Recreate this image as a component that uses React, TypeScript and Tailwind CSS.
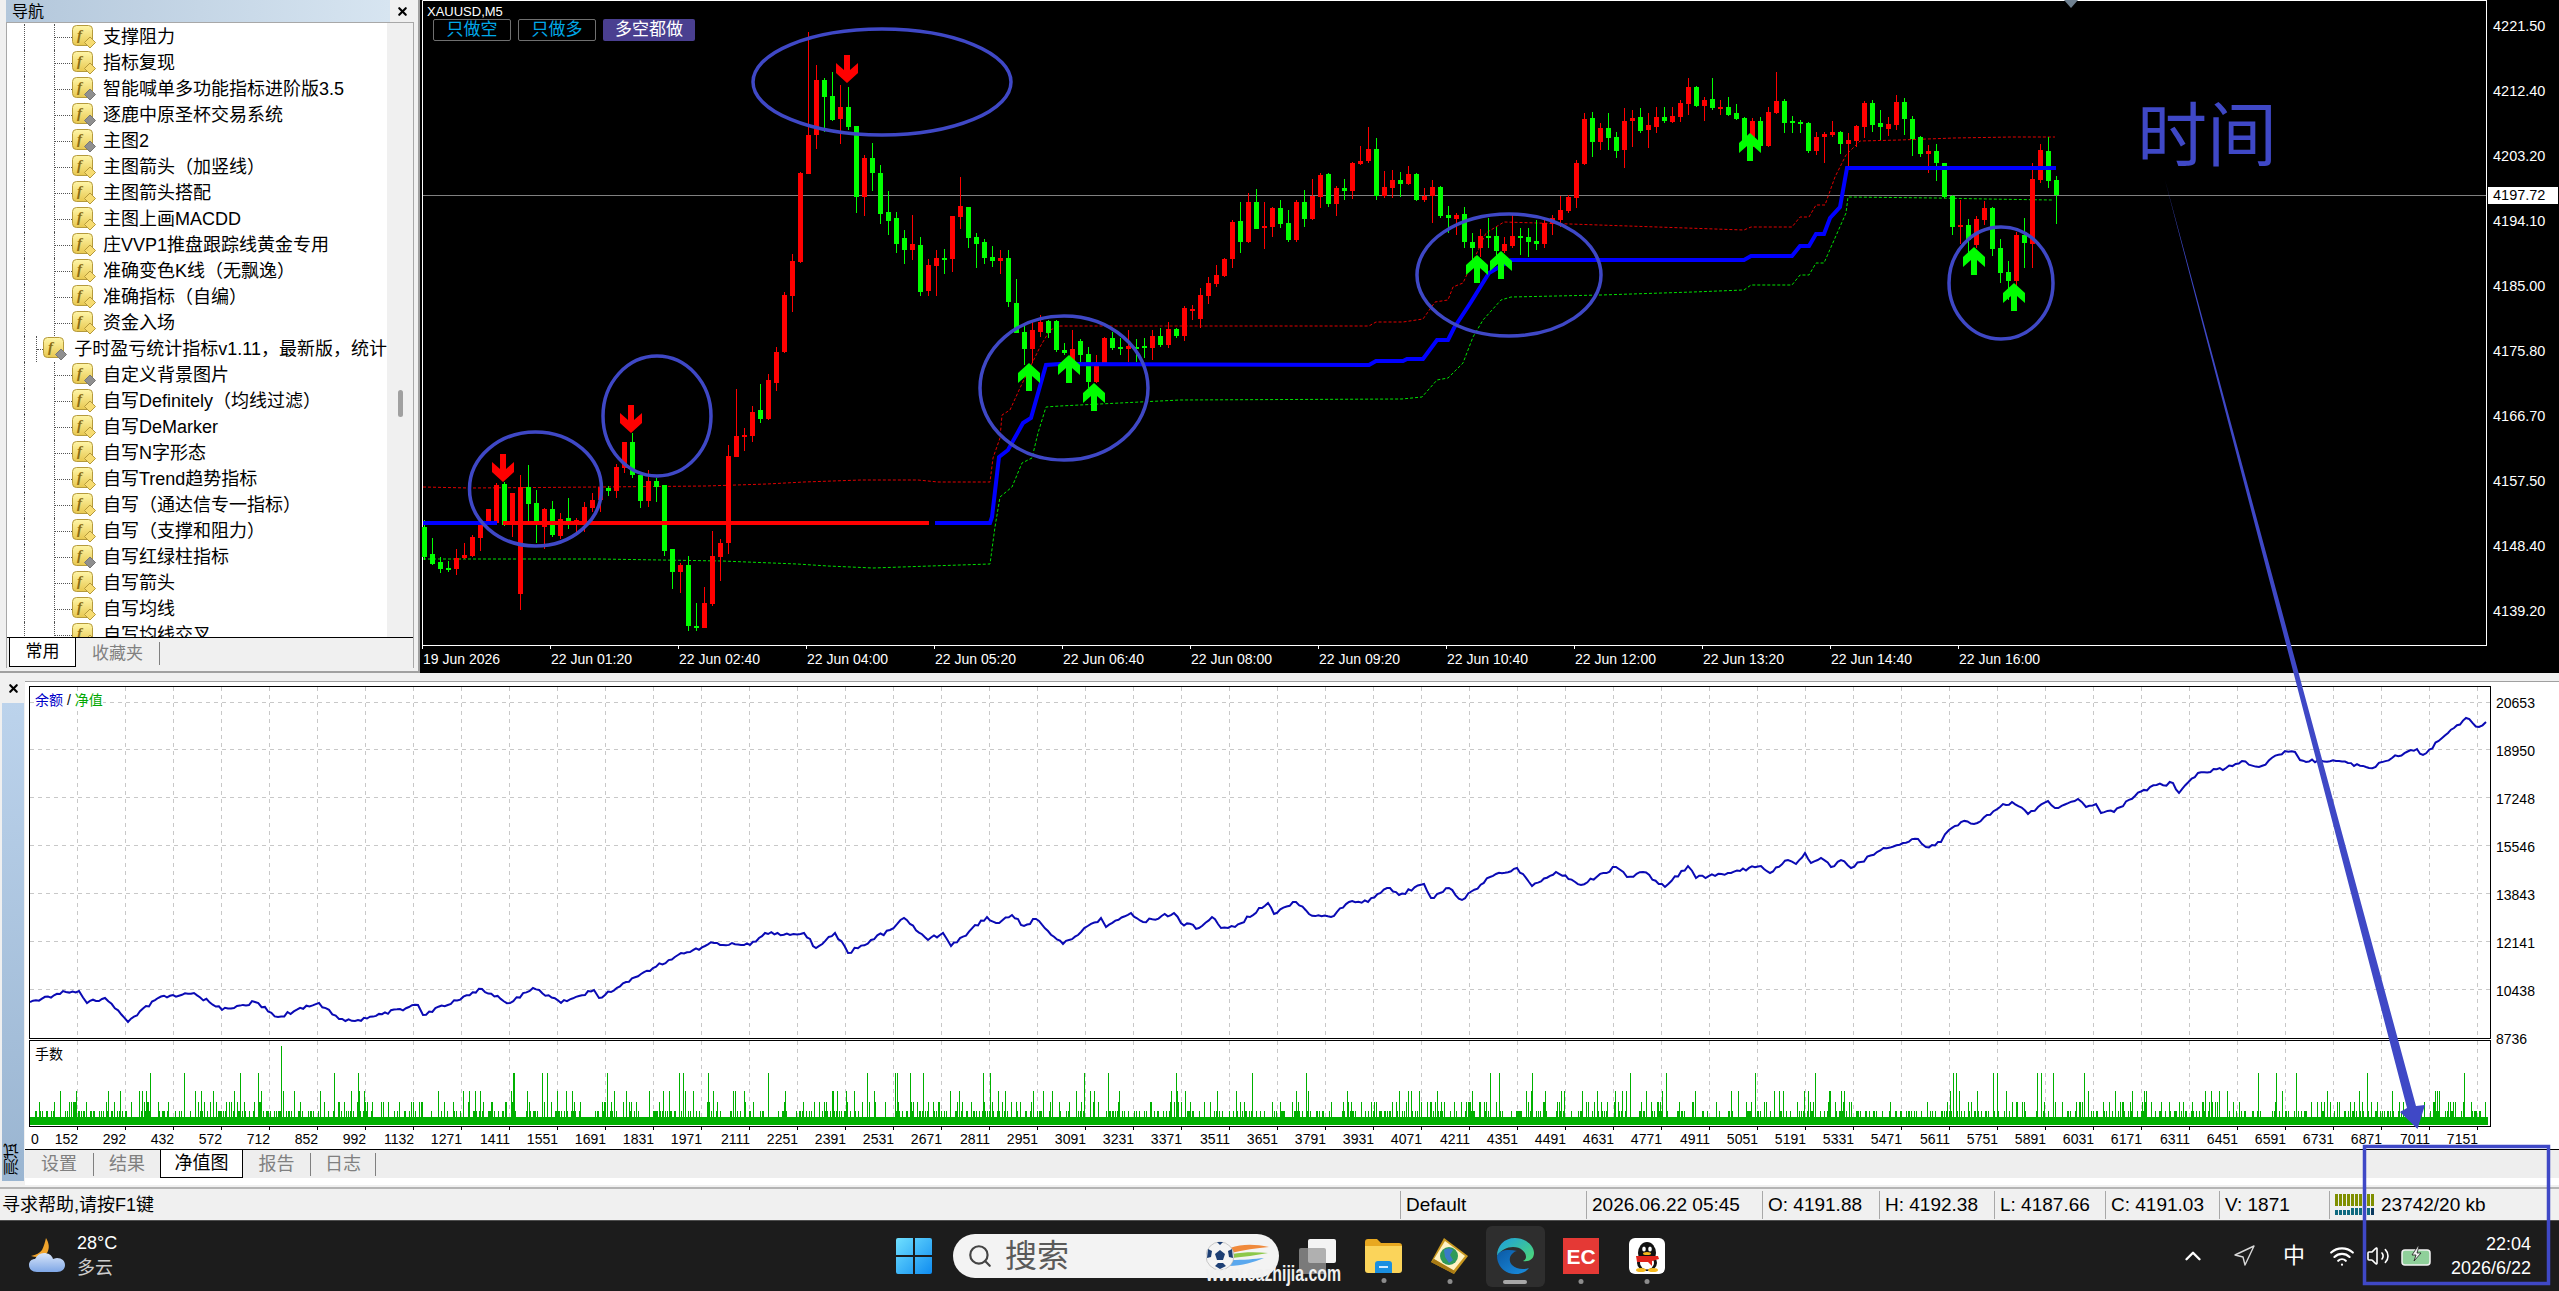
import React from 'react';
import { ChevronUp, Navigation, Search, Volume2, Wifi, X } from 'lucide-react';

const INDICATORS: [string, boolean][] = [
  ['支撑阻力', false], ['指标复现', false], ['智能喊单多功能指标进阶版3.5', true], ['逐鹿中原圣杯交易系统', true],
  ['主图2', true], ['主图箭头（加竖线）', false], ['主图箭头搭配', false], ['主图上画MACDD', false],
  ['庄VVP1推盘跟踪线黄金专用', false], ['准确变色K线（无飘逸）', false], ['准确指标（自编）', false], ['资金入场', false],
  ['子时盈亏统计指标v1.11，最新版，统计', true], ['自定义背景图片', true], ['自写Definitely（均线过滤）', false], ['自写DeMarker', false],
  ['自写N字形态', false], ['自写Trend趋势指标', false], ['自写（通达信专一指标）', false], ['自写（支撑和阻力）', false],
  ['自写红绿柱指标', true], ['自写箭头', false], ['自写均线', false], ['自写均线交叉', false],
];

const PRICES = ['4221.50', '4212.40', '4203.20', '4194.10', '4185.00', '4175.80', '4166.70', '4157.50', '4148.40', '4139.20'];
const TIMES = ['19 Jun 2026', '22 Jun 01:20', '22 Jun 02:40', '22 Jun 04:00', '22 Jun 05:20', '22 Jun 06:40', '22 Jun 08:00', '22 Jun 09:20', '22 Jun 10:40', '22 Jun 12:00', '22 Jun 13:20', '22 Jun 14:40', '22 Jun 16:00'];
const EQUITY_LABELS = ['20653', '18950', '17248', '15546', '13843', '12141', '10438', '8736'];
const X_LABELS = ['152', '292', '432', '572', '712', '852', '992', '1132', '1271', '1411', '1551', '1691', '1831', '1971', '2111', '2251', '2391', '2531', '2671', '2811', '2951', '3091', '3231', '3371', '3511', '3651', '3791', '3931', '4071', '4211', '4351', '4491', '4631', '4771', '4911', '5051', '5191', '5331', '5471', '5611', '5751', '5891', '6031', '6171', '6311', '6451', '6591', '6731', '6871', '7011', '7151'];

// candle rows: red?, high, body top, body bottom, low (y * 3, read off the chart)
type Candle = [number, number, number, number, number];
const EARLY: Candle[] = [
  [0, 570, 590, 680, 690], [0, 625, 672, 702, 705], [0, 680, 696, 717, 730], [0, 693, 714, 720, 725], [1, 657, 685, 717, 735],
  [1, 640, 675, 685, 687], [1, 615, 620, 678, 680], [1, 570, 585, 623, 662], [1, 537, 537, 578, 580], [1, 460, 465, 578, 580],
  [0, 455, 462, 585, 588], [1, 489, 489, 580, 620], [1, 435, 472, 792, 840], [0, 405, 472, 522, 575], [0, 480, 519, 575, 640],
  [1, 535, 537, 590, 658], [0, 513, 537, 615, 622], [1, 550, 567, 618, 628], [0, 505, 563, 575, 598], [1, 565, 570, 578, 605],
  [1, 515, 531, 578, 605], [1, 490, 510, 535, 545], [1, 470, 470, 510, 545], [0, 468, 473, 483, 497], [1, 403, 410, 483, 503],
  [1, 335, 335, 413, 428], [0, 310, 336, 435, 445], [0, 435, 435, 513, 533], [1, 420, 453, 513, 530], [0, 445, 453, 470, 515],
  [0, 465, 465, 662, 678], [0, 657, 657, 725, 777], [1, 700, 705, 725, 788], [0, 678, 705, 888, 903], [0, 820, 888, 893, 903],
  [1, 770, 820, 893, 893], [1, 603, 678, 822, 827], [1, 628, 639, 680, 753], [1, 345, 378, 640, 672], [1, 178, 318, 380, 382],
  [1, 293, 315, 320, 363], [1, 228, 246, 317, 335], [0, 163, 240, 267, 278], [1, 132, 150, 268, 270], [1, 50, 66, 158, 183],
];
const LATE: Candle[] = [
  [1, 875, 885, 1056, 1060], [1, 762, 783, 888, 935], [1, 515, 518, 785, 788], [1, 96, 405, 522, 522], [1, 195, 240, 405, 447],
  [0, 235, 240, 291, 395], [0, 217, 288, 360, 362], [1, 255, 321, 357, 432], [0, 261, 321, 381, 390], [0, 378, 378, 590, 638],
  [1, 465, 473, 591, 648], [0, 430, 473, 519, 573], [0, 495, 519, 642, 672], [0, 573, 636, 663, 705], [0, 636, 654, 732, 760],
  [0, 690, 714, 750, 792], [1, 645, 732, 750, 780], [0, 711, 735, 876, 888], [1, 777, 795, 873, 888], [1, 750, 774, 798, 888],
  [0, 747, 774, 777, 822], [1, 648, 648, 777, 816], [1, 531, 618, 651, 687], [0, 621, 621, 714, 744], [0, 699, 711, 732, 804],
  [0, 717, 726, 774, 792], [0, 738, 771, 783, 801], [1, 750, 774, 783, 822], [0, 750, 774, 906, 921], [0, 837, 909, 999, 1000],
  [0, 975, 995, 1047, 1095], [1, 960, 990, 1047, 1090], [1, 945, 965, 995, 1010], [0, 960, 962, 1000, 1015], [0, 960, 962, 1050, 1055],
  [0, 1030, 1050, 1060, 1065], [1, 990, 1048, 1090, 1095], [0, 1018, 1022, 1065, 1085], [0, 1040, 1062, 1145, 1165], [1, 1065, 1095, 1145, 1150],
  [1, 1010, 1015, 1090, 1092], [0, 995, 1014, 1045, 1050], [0, 1015, 1040, 1047, 1065], [1, 990, 1038, 1047, 1085], [0, 1018, 1040, 1044, 1085],
  [0, 1015, 1037, 1044, 1075], [1, 990, 1008, 1044, 1080], [0, 985, 1008, 1035, 1040], [1, 965, 988, 1036, 1045], [0, 985, 988, 1008, 1015],
  [1, 918, 925, 1008, 1022], [1, 915, 926, 930, 960], [1, 865, 885, 958, 985], [1, 830, 850, 888, 912], [1, 795, 826, 852, 860],
  [1, 775, 777, 828, 830], [1, 660, 665, 777, 805], [0, 605, 663, 725, 760], [1, 580, 606, 725, 730], [0, 568, 606, 686, 688],
  [1, 606, 678, 682, 747], [1, 620, 624, 682, 712], [0, 600, 624, 672, 685], [0, 630, 669, 720, 725], [1, 600, 605, 720, 725],
  [0, 570, 606, 656, 680], [1, 537, 588, 657, 660], [1, 520, 525, 590, 625], [0, 518, 522, 612, 622], [1, 558, 564, 612, 648],
  [0, 537, 564, 573, 600], [1, 485, 488, 573, 598], [1, 437, 483, 492, 495], [1, 380, 447, 484, 490], [0, 413, 447, 588, 600],
  [1, 513, 561, 588, 593], [1, 510, 540, 564, 593], [0, 515, 540, 552, 590], [1, 498, 522, 552, 555], [0, 518, 521, 600, 603],
  [1, 563, 588, 600, 605], [1, 540, 561, 588, 668], [0, 558, 561, 648, 655], [0, 618, 645, 655, 700], [1, 640, 645, 657, 705],
  [0, 621, 642, 726, 745], [0, 700, 726, 745, 780], [1, 688, 708, 745, 770], [0, 655, 708, 713, 745], [0, 680, 708, 752, 775],
  [1, 710, 732, 752, 760], [1, 640, 708, 738, 745], [0, 685, 708, 714, 765], [0, 685, 711, 726, 770], [0, 660, 723, 732, 750],
  [1, 660, 669, 732, 745], [1, 645, 654, 672, 705], [1, 588, 630, 660, 680], [1, 585, 591, 633, 640], [1, 480, 489, 594, 625],
  [1, 338, 357, 492, 495], [0, 336, 354, 426, 470], [1, 370, 384, 426, 450], [0, 340, 384, 414, 450], [0, 395, 411, 453, 475],
  [1, 325, 363, 450, 505], [1, 330, 354, 363, 440], [0, 325, 351, 393, 398], [1, 340, 375, 390, 445], [1, 322, 351, 381, 400],
  [0, 322, 351, 363, 370], [1, 322, 348, 366, 368], [1, 300, 309, 351, 365], [1, 235, 261, 312, 345], [0, 258, 261, 318, 320],
  [1, 290, 300, 318, 362], [0, 235, 297, 324, 330], [1, 300, 321, 327, 345], [0, 290, 321, 345, 347], [0, 312, 339, 357, 360],
  [0, 350, 354, 425, 445], [1, 355, 363, 440, 470], [0, 350, 363, 438, 440], [1, 320, 336, 438, 440], [1, 215, 303, 340, 342],
  [0, 296, 303, 369, 400], [0, 348, 363, 369, 400], [0, 360, 366, 372, 400], [0, 366, 369, 453, 460], [1, 395, 411, 453, 465],
  [1, 395, 402, 411, 490], [1, 363, 396, 405, 410], [0, 393, 396, 432, 462], [1, 400, 420, 432, 500], [1, 375, 378, 423, 440],
  [1, 303, 309, 381, 413], [0, 300, 309, 375, 395], [0, 330, 369, 381, 420], [1, 350, 372, 387, 408], [1, 285, 306, 375, 390],
  [0, 294, 306, 357, 405], [0, 348, 357, 417, 468], [0, 408, 411, 462, 470], [1, 435, 453, 462, 520], [0, 432, 453, 489, 543],
  [0, 488, 489, 591, 595], [0, 585, 588, 681, 705], [1, 600, 675, 681, 732], [0, 657, 675, 720, 760], [1, 648, 657, 735, 745],
  [1, 603, 624, 660, 675], [0, 620, 624, 747, 768], [0, 717, 744, 819, 848], [0, 783, 816, 843, 900], [1, 695, 705, 843, 900],
  [0, 654, 705, 729, 804], [1, 490, 537, 732, 804], [1, 432, 450, 540, 550], [0, 412, 453, 543, 565], [0, 528, 540, 585, 672],
];
const CANDLES: Candle[] = [...EARLY.map(([c, h, t, b, l]): Candle => [c, h + 990, t + 990, b + 990, l + 990]), ...LATE];

const BLUE_A = '423,523 497,523';
const RED_A = '503,523 929,523';
const BLUE_B = '935,523 990,523 992,517 999,457 1008,450 1023,423 1031,418 1046,365 1060,364 1369,365 1376,361 1403,361 1407,359 1423,359 1437,340 1448,340 1454,328 1471,302 1489,273 1511,260 1744,260 1751,256 1792,256 1800,246 1809,246 1816,234 1824,234 1830,218 1840,207 1847,168 2056,168';
const RED_DASH = '423,487 470,488 600,487 706,486 767,484 804,482 861,480 918,480 938,482 990,482 993,458 1000,438 1002,415 1010,410 1020,388 1040,347 1050,330 1060,326 1369,326 1376,322 1403,322 1423,319 1435,302 1448,300 1453,287 1463,283 1486,233 1504,222 1570,224 1744,230 1751,227 1792,227 1800,217 1809,217 1816,205 1825,205 1835,177 1846,155 1860,141 1900,140 1954,138 2012,137 2055,137';
const GREEN_DASH = '423,559 600,559 722,561 797,564 828,566 873,568 930,566 990,564 995,527 1000,497 1012,487 1022,463 1032,458 1038,433 1046,407 1060,406 1180,400 1402,399 1422,397 1437,380 1448,378 1463,363 1473,337 1483,320 1501,300 1511,297 1601,295 1693,292 1744,290 1751,285 1792,285 1800,275 1809,275 1816,263 1824,263 1835,238 1846,213 1848,197 1936,198 1987,199 2052,200';

const DOWN_ARROWS: [number, number][] = [[847, 55], [503, 454], [631, 405]];
const UP_ARROWS: [number, number][] = [[1069, 355], [1094, 383], [1029, 363], [1477, 255], [1501, 251], [1750, 133], [1974, 247], [2014, 283]];
const RINGS = [[882, 82, 129, 53], [535.5, 489, 66, 57], [657, 416, 54, 60], [1064, 388, 84, 72], [1509, 275, 92, 61], [2001, 283, 52, 56]];

const EQUITY_POINTS: [number, number][] = [
  [30, 1002], [66, 992], [79, 991], [87, 1003], [105, 998], [128, 1022], [158, 998], [194, 993], [222, 1010], [255, 1002], [278, 1017], [319, 1003],
  [339, 1019], [355, 1021], [418, 1005], [423, 1015], [482, 989], [510, 1003], [533, 988], [561, 1003], [594, 990], [599, 998], [653, 968], [678, 955],
  [714, 943], [750, 945], [765, 933], [790, 935], [804, 933], [816, 948], [835, 933], [848, 953], [871, 940], [890, 930], [904, 918], [928, 940], [943, 933],
  [951, 946], [987, 917], [996, 923], [1012, 915], [1024, 926], [1036, 919], [1063, 944], [1081, 932], [1101, 918], [1106, 927], [1131, 913], [1143, 922],
  [1174, 913], [1181, 923], [1199, 928], [1212, 917], [1221, 928], [1235, 927], [1268, 903], [1274, 914], [1296, 902], [1309, 914], [1331, 917], [1349, 902],
  [1368, 902], [1387, 888], [1399, 895], [1424, 884], [1431, 898], [1449, 888], [1462, 900], [1490, 877], [1517, 868], [1532, 886], [1556, 872], [1581, 885],
  [1616, 867], [1627, 877], [1643, 872], [1665, 887], [1688, 866], [1696, 878], [1731, 873], [1761, 866], [1770, 873], [1788, 860], [1796, 864], [1805, 853],
  [1811, 863], [1821, 858], [1831, 867], [1841, 860], [1851, 868], [1877, 852], [1903, 843], [1918, 839], [1926, 847], [1941, 842], [1949, 830], [1961, 822],
  [1974, 824], [2000, 807], [2012, 802], [2028, 814], [2048, 801], [2055, 808], [2078, 799], [2086, 807], [2096, 804], [2101, 813], [2114, 812], [2135, 796],
  [2150, 787], [2173, 783], [2179, 793], [2198, 773], [2226, 768], [2242, 761], [2259, 767], [2285, 751], [2295, 752], [2300, 760], [2336, 761], [2369, 768],
  [2392, 758], [2417, 749], [2423, 755], [2448, 733], [2466, 718], [2479, 727], [2486, 722],
];

// same picture on every load
let seed = 48271;
const rand = () => {
  seed = (seed * 16807) % 2147483647;
  return seed / 2147483647;
};

const equityPath = () => {
  const out: string[] = [];
  EQUITY_POINTS.forEach(([x, y], i) => {
    out.push(`${x},${y}`);
    const next = EQUITY_POINTS[i + 1];
    if (!next) return;
    const steps = Math.floor((next[0] - x) / 3);
    for (let s = 1; s < steps; s++) {
      const t = s / steps;
      out.push(`${(x + (next[0] - x) * t).toFixed(1)},${(y + (next[1] - y) * t + (rand() - 0.5) * 3.6).toFixed(1)}`);
    }
  });
  return out.join(' ');
};
const EQUITY_LINE = equityPath();

const volumePath = () => {
  let d = 'M281.5 1046V1117M1815.5 1073V1117';
  for (let x = 30; x < 2488; x++) {
    const r = rand();
    let top = 0;
    if (r < 0.018) top = 1073;
    else if (r < 0.07) top = 1091;
    else if (r < 0.17) top = 1102;
    else if (r < 0.4) top = 1111;
    if (top) d += `M${x + 0.5} ${top}V1117`;
  }
  return d;
};
const VOLUME_PATH = volumePath();

const H_GRID = [702, 749, 797, 845, 893, 941, 989];
const V_GRID = Array.from({ length: 51 }, (_, i) => 77.5 + 48 * i);

const IndicatorIcon = ({ gray }: { gray: boolean }) => (
  <svg width="24" height="24" viewBox="0 0 24 24" className="shrink-0">
    <defs>
      <linearGradient id="ind" x1="0" y1="0" x2="0" y2="1">
        <stop offset="0" stopColor="#fff6a8" />
        <stop offset="1" stopColor="#e8c850" />
      </linearGradient>
    </defs>
    <rect x="0.5" y="0.5" width="20" height="20" rx="4" fill="url(#ind)" stroke="#b59a3c" />
    <text x="5" y="15" fontSize="15" fontStyle="italic" fontWeight="700" fill="#8a6d14" className="font-['Liberation_Serif',serif]">f</text>
    <path d="M18 12l5.5 5.5L18 23l-5.5-5.5z" fill={gray ? '#8f8f8f' : '#f7dc72'} stroke={gray ? '#777777' : '#b59a3c'} />
  </svg>
);

const Navigator = () => (
  <aside className="flex h-[673px] w-[420px] shrink-0 flex-col border-b-2 border-r-2 border-[#a0a0a0] bg-[#f0f0f0]">
    <div className="flex h-[22px] shrink-0 pl-[6px]">
      <div className="flex h-full w-[384px] items-end bg-gradient-to-r from-[#b3c7db] to-[#d7e5f1] pb-[2px] pl-[6px] text-[16px] leading-none text-black">导航</div>
      <div className="flex flex-1 items-center justify-center pr-[3px]">
        <X size={13} strokeWidth={4} className="text-black" />
      </div>
    </div>
    <div className="ml-[6px] flex h-[646px] w-[408px] flex-col border-x border-t border-[#a8a8a8] border-b-[#e0e0e0]">
      <div className="flex h-[614px] overflow-hidden bg-white">
        <div className="w-[380px] overflow-hidden pt-px">
          {INDICATORS.map(([name, gray]) => (
            <div key={name} className="flex h-[26px] items-stretch">
              <div className="ml-[17px] w-[30px] border-l border-dotted border-[#555555]" />
              <div className="flex w-[18px] items-center border-l border-dotted border-[#555555]">
                <div className="w-full border-t border-dotted border-[#555555]" />
              </div>
              <div className="flex items-center">
                <IndicatorIcon gray={gray} />
                <span className="ml-[7px] whitespace-nowrap text-[18px] leading-none text-black">{name}</span>
              </div>
            </div>
          ))}
        </div>
        <div className="flex w-[26px] flex-col items-center bg-[#f0f0f0] pt-[367px]">
          <div className="h-[27px] w-[5px] rounded-full bg-[#a0a0a0]" />
        </div>
      </div>
      <div className="flex h-[31px] border-t border-black bg-[#f0f0f0] pl-[2px]">
        <div className="flex h-[29px] w-[67px] items-center justify-center border-x border-b border-black bg-white text-[17px] text-black">常用</div>
        <div className="my-[4px] flex h-[23px] w-[84px] items-center justify-center border-r border-[#808080] text-[17px] text-[#808080]">收藏夹</div>
      </div>
    </div>
  </aside>
);

const SignalArrow = ({ x, y, up }: { x: number; y: number; up?: boolean }) =>
  up ? (
    <polygon points={`${x - 3},${y + 28} ${x + 3},${y + 28} ${x + 3},${y + 13} ${x + 11},${y + 20} ${x + 11},${y + 10} ${x},${y} ${x - 11},${y + 10} ${x - 11},${y + 20} ${x - 3},${y + 13}`} fill="#00ff00" />
  ) : (
    <polygon points={`${x - 3},${y} ${x + 3},${y} ${x + 3},${y + 15} ${x + 11},${y + 8} ${x + 11},${y + 18} ${x},${y + 28} ${x - 11},${y + 18} ${x - 11},${y + 8} ${x - 3},${y + 15}`} fill="#ff0000" />
  );

const PricePlot = () => (
  <svg width="2064" height="646" viewBox="422 0 2064 646" className="block">
    <path d="M422.5 646V0.5H2486M422 645.5H2486" stroke="#ffffff" fill="none" />
    <path d="M423 195.5H2486" stroke="#808080" />
    <polygon points="2064,0 2078,0 2071,8" fill="#6f8090" />
    <polyline points={RED_DASH} fill="none" stroke="#e00000" strokeDasharray="3 2" />
    <polyline points={GREEN_DASH} fill="none" stroke="#00e000" strokeDasharray="3 2" />
    <g shapeRendering="crispEdges">
      {CANDLES.map(([red, hi, top, bot, lo], i) => {
        const x = 424 + 8 * i;
        const fill = red ? '#ff0000' : '#00ff00';
        return (
          <g key={i} fill={fill}>
            <rect x={x} y={hi / 3} width="1" height={(lo - hi) / 3} />
            <rect x={x - 2} y={top / 3} width="5" height={Math.max(2, (bot - top) / 3)} />
          </g>
        );
      })}
    </g>
    <polyline points={BLUE_A} fill="none" stroke="#0000ff" strokeWidth="4" />
    <polyline points={RED_A} fill="none" stroke="#ff0000" strokeWidth="4" />
    <polyline points={BLUE_B} fill="none" stroke="#0000ff" strokeWidth="4" />
    {DOWN_ARROWS.map(([x, y]) => <SignalArrow key={x} x={x} y={y} />)}
    {UP_ARROWS.map(([x, y]) => <SignalArrow key={x} x={x} y={y} up />)}
    {RINGS.map(([cx, cy, rx, ry]) => (
      <ellipse key={cx} cx={cx} cy={cy} rx={rx} ry={ry} fill="none" stroke="#3f48c6" strokeWidth="3.5" />
    ))}
  </svg>
);

const ChartButton = ({ label, active }: { label: string; active?: boolean }) => (
  <div className={active ? 'flex h-[22px] w-[92px] items-center justify-center rounded-[2px] bg-[#4a3f90] text-[17px] text-white' : 'flex h-[22px] w-[78px] items-center justify-center rounded-[2px] border border-[#707070] text-[17px] text-[#00a8e8]'}>
    {label}
  </div>
);

const MainChart = () => (
  <section className="flex min-w-0 flex-1 bg-black pl-[2px]">
    <div className="relative w-[2064px] shrink-0">
      <PricePlot />
      <div className="absolute left-[5px] top-[4px] text-[13px] leading-[16px] text-white">XAUUSD,M5</div>
      <div className="absolute left-[11px] top-[19px] flex gap-[7px]">
        <ChartButton label="只做空" />
        <ChartButton label="只做多" />
        <ChartButton label="多空都做" active />
      </div>
      <div className="flex">
        {TIMES.map((t) => (
          <div key={t} className="w-[128px]">
            <div className="h-[3px] w-px bg-white" />
            <div className="whitespace-nowrap pl-px text-[14px] leading-[20px] text-white">{t}</div>
          </div>
        ))}
      </div>
    </div>
    <div className="relative h-[646px] flex-1 border-l border-white">
      <div className="-mt-[6px]">
        {PRICES.map((p) => (
          <div key={p} className="flex h-[65px] items-center pl-[6px] text-[14.5px] text-white">{p}</div>
        ))}
      </div>
      <div className="absolute left-[1px] top-[187px] flex h-[17px] w-[70px] items-center bg-white pl-[5px] text-[14.5px] text-black">4197.72</div>
    </div>
  </section>
);

const EquityPlot = () => (
  <svg width="2460" height="351" viewBox="30 687 2460 351" className="block">
    <g stroke="#c8c8c8" strokeDasharray="4 4">
      {H_GRID.map((y) => <path key={y} d={`M30 ${y + 0.5}H2490`} />)}
      {V_GRID.map((x) => <path key={x} d={`M${x} 687V1038`} />)}
    </g>
    <polyline points={EQUITY_LINE} fill="none" stroke="#0a0ab4" strokeWidth="2" />
  </svg>
);

const VolumePlot = () => (
  <svg width="2460" height="85" viewBox="30 1041 2460 85" className="block">
    <g stroke="#c8c8c8" strokeDasharray="4 4">
      {V_GRID.map((x) => <path key={x} d={`M${x} 1041V1126`} />)}
    </g>
    <path d={VOLUME_PATH} stroke="#00b000" fill="none" shapeRendering="crispEdges" />
    <rect x="30" y="1117" width="2458" height="8" fill="#00b000" />
  </svg>
);

const Terminal = () => (
  <section className="flex h-[514px] bg-[#f0f0f0]">
    <div className="flex w-[25px] shrink-0 flex-col items-center pl-[1px]">
      <div className="flex h-[30px] w-full items-center justify-center">
        <X size={13} strokeWidth={4} className="text-black" />
      </div>
      <div className="flex h-[478px] w-[22px] items-end justify-center bg-gradient-to-b from-[#bcd3ec] to-[#9ab5d1] pb-[6px]">
        <span className="rotate-180 text-[16px] leading-none text-black [writing-mode:vertical-rl]">测试</span>
      </div>
    </div>
    <div className="min-w-0 flex-1 pt-[8px]">
      <div className="border-t border-[#a0a0a0] bg-white pt-[4px]">
        <div className="pl-[4px]">
          <div className="flex h-[353px]">
            <div className="relative h-[353px] w-[2462px] shrink-0 border border-black">
              <EquityPlot />
              <div className="absolute left-[5px] top-[4px] bg-white text-[14px] leading-[18px]">
                <span className="text-[#0000c8]">余额</span>
                <span className="text-black"> / </span>
                <span className="text-[#00a800]">净值</span>
              </div>
            </div>
            <div className="-mt-[7px] pl-[5px] text-[14px] text-black">
              {EQUITY_LABELS.map((l) => (
                <div key={l} className="flex h-[48px] items-center">{l}</div>
              ))}
            </div>
          </div>
          <div className="relative mt-px h-[87px] w-[2462px] border border-black">
            <VolumePlot />
            <div className="absolute left-[5px] top-[4px] text-[14px] leading-[18px] text-black">手数</div>
          </div>
          <div className="flex h-[3px] pl-px">
            {X_LABELS.map((l) => <div key={l} className="w-[48px] border-r border-black" />)}
          </div>
          <div className="flex h-[19px] pl-px text-[14px] leading-[19px] text-black">
            {X_LABELS.map((l, i) => (
              <div key={l} className={i === 0 ? 'flex w-[48px] justify-between pl-[1px]' : 'w-[48px] text-right'}>
                {i === 0 && <span>0</span>}
                <span>{l}</span>
              </div>
            ))}
          </div>
        </div>
        <div className="flex h-[36px] border-t border-black bg-white">
          <div className="flex h-[28px] flex-1 bg-[#eeeeee] text-[18px] text-[#808080]">
            <div className="mt-[3px] flex h-[23px] w-[69px] items-center justify-center border-r border-[#808080]">设置</div>
            <div className="mt-[3px] flex h-[23px] w-[66px] items-center justify-center">结果</div>
            <div className="flex h-[28px] w-[83px] items-center justify-center border-x border-b border-black bg-white text-black">净值图</div>
            <div className="mt-[3px] flex h-[23px] w-[68px] items-center justify-center border-r border-[#808080]">报告</div>
            <div className="mt-[3px] flex h-[23px] w-[65px] items-center justify-center border-r border-[#808080]">日志</div>
          </div>
        </div>
      </div>
    </div>
  </section>
);

const MemoryBars = () => (
  <svg width="40" height="22" viewBox="0 0 40 22" className="mr-[6px] shrink-0" shapeRendering="crispEdges">
    {Array.from({ length: 10 }, (_, i) => (
      <g key={i}>
        <rect x={i * 4} y="0" width="2.5" height="12" fill="#7f8f00" />
        <rect x={i * 4} y={21 - (i < 4 ? 5 : 7)} width="2.5" height={i < 4 ? 5 : 7} fill={i === 9 ? '#0c3a60' : '#0f6a80'} />
      </g>
    ))}
  </svg>
);

const StatusCell = ({ width, children }: { width: string; children: React.ReactNode }) => (
  <div className={`flex h-[28px] items-center border-l border-[#a8a8a8] pl-[5px] ${width}`}>{children}</div>
);

const StatusBar = () => (
  <footer className="flex h-[33px] items-center border-t-2 border-[#b4b4b4] bg-[#f0f0f0] text-[19px] leading-none text-black">
    <div className="w-[1400px] pl-[2px] text-[18px]">寻求帮助,请按F1键</div>
    <StatusCell width="w-[186px]">Default</StatusCell>
    <StatusCell width="w-[176px]">2026.06.22 05:45</StatusCell>
    <StatusCell width="w-[117px]">O: 4191.88</StatusCell>
    <StatusCell width="w-[115px]">H: 4192.38</StatusCell>
    <StatusCell width="w-[111px]">L: 4187.66</StatusCell>
    <StatusCell width="w-[114px]">C: 4191.03</StatusCell>
    <StatusCell width="w-[110px]">V: 1871</StatusCell>
    <StatusCell width="flex-1"><MemoryBars />23742/20 kb</StatusCell>
  </footer>
);

const WeatherIcon = () => (
  <svg width="36" height="36" viewBox="0 0 36 36">
    <defs>
      <linearGradient id="cloud" x1="0" y1="0" x2="0" y2="1">
        <stop offset="0" stopColor="#d9e6fa" />
        <stop offset="1" stopColor="#7fa7e6" />
      </linearGradient>
    </defs>
    <path d="M17 0c3 5 4 10 1 15-3 4-10 5-16 3 5-1 9-3 11-6 2-4 3-8 4-12z" fill="#f0a42c" />
    <path d="M8 34C3 34 0 31 0 27c0-4 3-6 6-6 2-4 5-6 9-6 4 0 8 2 9 6 1 0 2-1 4-1 5 0 8 3 8 7 0 4-3 7-8 7z" fill="url(#cloud)" />
  </svg>
);

const WindowsLogo = () => (
  <svg width="36" height="36" viewBox="0 0 36 36">
    <defs>
      <linearGradient id="win" x1="0" y1="0" x2="1" y2="1">
        <stop offset="0" stopColor="#6fe0ff" />
        <stop offset="1" stopColor="#0f8cf0" />
      </linearGradient>
    </defs>
    <path d="M2 0h15v17H0V2a2 2 0 012-2zM19 0h15a2 2 0 012 2v15H19zM0 19h17v17H2a2 2 0 01-2-2zM19 19h17v15a2 2 0 01-2 2H19z" fill="url(#win)" />
  </svg>
);

const SoccerBall = () => (
  <svg width="64" height="30" viewBox="0 0 64 30" className="shrink-0">
    <path d="M24 7c12-4 24-4 39-1-12 1-26 3-38 6z" fill="#f08a3c" />
    <path d="M26 13c12-2 24-2 36-1-12 2-24 4-36 5z" fill="#8cc84b" />
    <path d="M25 19c12 0 24-1 33-2-10 4-22 8-35 8z" fill="#5aa8ee" />
    <circle cx="14" cy="15" r="14" fill="#f4f4f4" stroke="#9a9a9a" strokeWidth="0.5" />
    <path d="M14 9l5 4-2 6h-6l-2-6zM2 8l4 2-1 6-4 1zM26 8l-4 2 1 6 4 1zM9 25l3-3h5l3 3-6 3zM11 1h6l-3 3z" fill="#1d3f74" />
  </svg>
);

const TaskView = () => (
  <svg width="37" height="35" viewBox="0 0 37 35">
    <rect x="9" y="0" width="28" height="24" rx="2" fill="#f4f4f4" />
    <rect x="0" y="9" width="27" height="26" rx="2" fill="#9a9a9a" fillOpacity="0.75" />
  </svg>
);

const FolderIcon = () => (
  <svg width="37" height="34" viewBox="0 0 37 34">
    <path d="M0 3a3 3 0 013-3h9l4 4h18a3 3 0 013 3v5H0z" fill="#e8a820" />
    <path d="M0 7h37v24a3 3 0 01-3 3H3a3 3 0 01-3-3z" fill="#fbd45a" />
    <path d="M10 25a3 3 0 013-3h11a3 3 0 013 3v9H10z" fill="#1a8fe0" />
    <rect x="14" y="27" width="9" height="2" fill="#cfeaff" />
  </svg>
);

const BookIcon = () => (
  <svg width="37" height="36" viewBox="0 0 37 36">
    <path d="M0 24L13 0l24 18-14 18z" fill="#c9981f" />
    <path d="M3 21L14 3l20 15-12 15z" fill="#fff3c4" />
    <circle cx="18" cy="18" r="9" fill="#2f9a5a" />
    <path d="M13 12c3-2 7-2 9 0l-3 5 3 5-4 3-4-6z" fill="#3a7ac8" />
    <path d="M0 24l23 12 1-3L3 21z" fill="#a87a14" />
  </svg>
);

const EdgeIcon = () => (
  <svg width="37" height="36" viewBox="0 0 37 36">
    <defs>
      <linearGradient id="edgeTop" x1="0" y1="0" x2="1" y2="0.8">
        <stop offset="0" stopColor="#1b9de2" />
        <stop offset="1" stopColor="#4ad47c" />
      </linearGradient>
      <linearGradient id="edgeLow" x1="0" y1="0" x2="1" y2="1">
        <stop offset="0" stopColor="#0c59a4" />
        <stop offset="1" stopColor="#1a8fe0" />
      </linearGradient>
    </defs>
    <path d="M18 0C7 0 0 8 0 18c4-6 10-9 16-9 8 0 13 5 13 10 0 2-1 3-3 4 6 1 11-2 11-8C37 7 28 0 18 0z" fill="url(#edgeTop)" />
    <path d="M0 18c0 10 8 18 18 18 6 0 11-2 14-6-6 2-13 1-17-3-3-3-3-8 0-11 2-2 3-3 5-3C11 11 2 12 0 18z" fill="url(#edgeLow)" />
  </svg>
);

const QqIcon = () => (
  <svg width="36" height="36" viewBox="0 0 36 36">
    <rect width="36" height="36" rx="6" fill="#ffffff" />
    <ellipse cx="18" cy="15" rx="9" ry="11" fill="#111111" />
    <ellipse cx="18" cy="25" rx="10" ry="8" fill="#111111" />
    <ellipse cx="18" cy="25" rx="7" ry="6.5" fill="#ffffff" />
    <ellipse cx="15" cy="11" rx="1.8" ry="2.6" fill="#ffffff" />
    <ellipse cx="21" cy="11" rx="1.8" ry="2.6" fill="#ffffff" />
    <ellipse cx="18" cy="15.5" rx="4" ry="1.6" fill="#f6b91c" />
    <path d="M7 18h22l1 3-7 2v5l-4-4H8z" fill="#e0241c" />
    <ellipse cx="12" cy="32" rx="5" ry="2" fill="#f6b91c" />
    <ellipse cx="24" cy="32" rx="5" ry="2" fill="#f6b91c" />
  </svg>
);

const BatteryIcon = () => (
  <svg width="30" height="20" viewBox="0 0 30 20">
    <rect x="1" y="4" width="28" height="15" rx="3" fill="#8fd09a" stroke="#f2f2f2" strokeWidth="1.5" />
    <path d="M17 0l-6 9h4l-2 6 7-8h-4l2-7z" fill="#f2f2f2" stroke="#1c1c1c" strokeWidth="0.8" />
  </svg>
);

const Dot = () => <span className="absolute -bottom-[10px] left-1/2 h-[5px] w-[5px] -translate-x-1/2 rounded-full bg-[#8c8c8c]" />;

const Taskbar = () => (
  <div className="relative flex h-[71px] items-center border-t border-[#4e4e4e] bg-[#1c1c1c] text-white">
    <div className="flex w-[896px] shrink-0 items-center pl-[29px]">
      <WeatherIcon />
      <div className="ml-[12px] text-[18px] leading-[25px]">
        <div>28°C</div>
        <div className="text-[#cccccc]">多云</div>
      </div>
    </div>
    <WindowsLogo />
    <div className="ml-[21px] flex h-[44px] w-[326px] items-center justify-between rounded-full bg-[#f3f3f3] pl-[14px] pr-[9px]">
      <div className="flex items-center">
        <Search size={26} strokeWidth={2} className="text-[#444444]" />
        <span className="ml-[12px] text-[32px] leading-none text-[#5a5a5a]">搜索</span>
      </div>
      <SoccerBall />
    </div>
    <div className="ml-[20px]"><TaskView /></div>
    <div className="relative ml-[29px]"><FolderIcon /><Dot /></div>
    <div className="relative ml-[29px]"><BookIcon /><Dot /></div>
    <div className="relative ml-[18px] flex h-[61px] w-[59px] items-center justify-center rounded-[6px] bg-[#2e2e2e]">
      <EdgeIcon />
      <span className="absolute bottom-[3px] left-[17px] h-[4px] w-[24px] rounded-full bg-[#a8a8a8]" />
    </div>
    <div className="relative ml-[18px]">
      <div className="flex h-[36px] w-[36px] items-center justify-center bg-[#e53935] text-[21px] font-bold leading-none text-white">EC</div>
      <Dot />
    </div>
    <div className="relative ml-[30px]"><QqIcon /><Dot /></div>
    <ChevronUp size={26} strokeWidth={2.2} className="ml-[515px] text-white" />
    <Navigation size={24} strokeWidth={1.4} className="ml-[26px] text-[#d8d8d8]" />
    <span className="ml-[27px] text-[22px] leading-none">中</span>
    <Wifi size={26} strokeWidth={2} className="ml-[24px]" />
    <Volume2 size={24} strokeWidth={1.6} className="ml-[11px]" />
    <div className="ml-[11px]"><BatteryIcon /></div>
    <div className="ml-auto pr-[28px] text-right text-[18px] leading-[24px]">
      <div>22:04</div>
      <div>2026/6/22</div>
    </div>
    <div className="absolute left-[1206px] top-[41px] origin-left scale-x-[0.72] whitespace-nowrap text-[22px] font-bold leading-[24px] text-[#f0f0f0]">www.eazhijia.com</div>
  </div>
);

const Annotations = () => (
  <>
    <svg width="2559" height="1291" viewBox="0 0 2559 1291" className="pointer-events-none absolute left-0 top-0">
      <polygon points="2165,180 2416,1106 2425,1105 2417.5,1129 2400,1112 2407,1108" fill="#3f48c6" />
      <rect x="2364.5" y="1146.5" width="184" height="137" fill="none" stroke="#3f48c6" strokeWidth="3.5" />
    </svg>
    <div className="pointer-events-none absolute left-[2137px] top-[97px] text-[70px] leading-[80px] text-[#3f48c6]">时间</div>
  </>
);

export default function App() {
  return (
    <div className="relative flex h-[1291px] w-[2559px] flex-col overflow-hidden bg-[#f0f0f0] font-['Liberation_Sans','Noto_Sans_CJK_SC',sans-serif]">
      <div className="flex h-[673px] shrink-0">
        <Navigator />
        <MainChart />
      </div>
      <Terminal />
      <StatusBar />
      <Taskbar />
      <Annotations />
    </div>
  );
}
